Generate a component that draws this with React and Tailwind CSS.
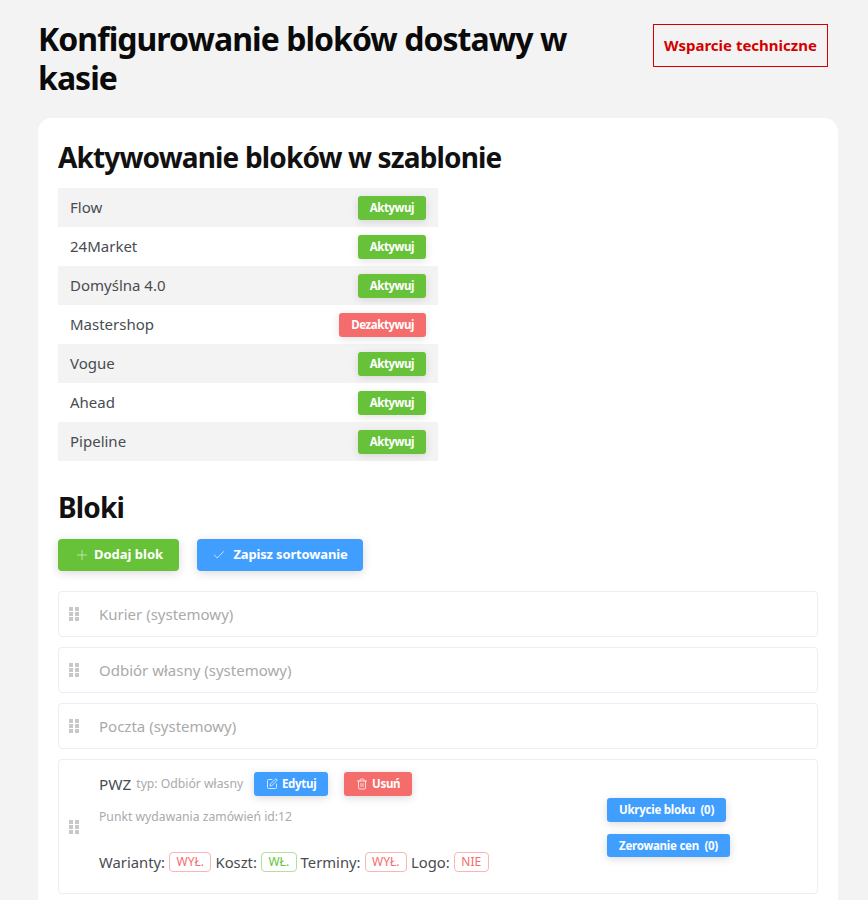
import React from "react";
import { Plus, Check, SquarePen, Trash2 } from "lucide-react";

const F = { fontFamily: '"Noto Sans", sans-serif' };

const rows = [
  ["Flow", 1], ["24Market", 1], ["Domyślna 4.0", 1], ["Mastershop", 0], ["Vogue", 1], ["Ahead", 1], ["Pipeline", 1],
];

function Grip() {
  return (
    <svg width="10" height="14" viewBox="0 0 10 14" className="shrink-0" fill="#c8c8c8">
      <rect x="0" y="0" width="4" height="4" /><rect x="6" y="0" width="4" height="4" />
      <rect x="0" y="5" width="4" height="4" /><rect x="6" y="5" width="4" height="4" />
      <rect x="0" y="10" width="4" height="4" /><rect x="6" y="10" width="4" height="4" />
    </svg>
  );
}

function Sys({ children }) {
  return (
    <div className="h-[46px] border border-[#ebeef5] rounded-[4px] flex items-center pl-[10px] gap-[20px] text-[15px] text-[#aaaaaa]">
      <Grip />
      <span>{children}</span>
    </div>
  );
}

function Tag({ on, children }) {
  return (
    <span className={"inline-flex items-center justify-center h-[20px] px-[6.5px] rounded-[4px] border text-[12px] " + (on ? "border-[#b3e19d] text-[#67c23a]" : "border-[#fab6b6] text-[#f56c6c]")}>
      {children}
    </span>
  );
}

export default function App() {
  return (
    <div style={F} className="h-[900px] overflow-hidden bg-[#f3f3f3] pl-[38px] pr-[30px] pt-[24px]">
      <div className="flex items-start justify-between pr-[10px]">
        <h1 className="w-[560px] text-[32px] leading-[39px] font-bold tracking-[-0.95px] text-[#0a0a0a] -mt-[5px]">Konfigurowanie bloków dostawy w kasie</h1>
        <button className="w-[175px] h-[43px] border border-[#d40000] text-[#d40000] text-[15px] font-bold">Wsparcie techniczne</button>
      </div>
      <div className="mt-[21px] w-[800px] bg-white rounded-[14px] p-[20px] h-[900px]">
        <h2 className="-mt-[1px] text-[28px] leading-[40px] font-bold tracking-[-0.85px] text-[#111111]">Aktywowanie bloków w szablonie</h2>
        <div className="mt-[11px] w-[380px]">
          {rows.map(([n, a], i) => (
            <div key={n} className={"h-[39px] flex items-center justify-between px-[12px] text-[15px] text-[#484c52] " + (i % 2 === 0 ? "bg-[#f3f3f3]" : "bg-white")}>
              <span>{n}</span>
              <button className={"h-[24px] px-[12px] rounded-[3px] text-[11.5px] font-bold tracking-[-0.45px] text-white shadow-[0_2px_8px_rgba(0,0,0,0.12)] " + (a ? "bg-[#67c23a]" : "bg-[#f56c6c]")}>{a ? "Aktywuj" : "Dezaktywuj"}</button>
            </div>
          ))}
        </div>
        <h2 className="mt-[24px] text-[28px] leading-[44px] font-bold tracking-[-0.85px] text-[#111111]">Bloki</h2>
        <div className="mt-[10px] flex gap-[18px]">
          <button className="h-[32px] w-[121px] rounded-[4px] bg-[#67c23a] text-white text-[13px] font-bold flex items-center justify-center gap-[4px] shadow-[0_2px_10px_rgba(0,0,0,0.15)]">
            <Plus size={16} strokeWidth={1.25} className="text-[#cdeabd]" />Dodaj blok
          </button>
          <button className="h-[32px] w-[166px] rounded-[4px] bg-[#409eff] text-white text-[13px] font-bold tracking-[-0.15px] flex items-center justify-center gap-[7px] shadow-[0_2px_10px_rgba(0,0,0,0.15)]">
            <Check size={14} strokeWidth={1.25} />Zapisz sortowanie
          </button>
        </div>
        <div className="mt-[20px] flex flex-col gap-[10px]">
          <Sys>Kurier (systemowy)</Sys>
          <Sys>Odbiór własny (systemowy)</Sys>
          <Sys>Poczta (systemowy)</Sys>
          <div className="h-[135px] border border-[#ebeef5] rounded-[4px] flex items-center pl-[10px] gap-[20px] text-[#484c52]">
            <Grip />
            <div className="flex-1 self-stretch pt-[12px] flex flex-col">
              <div className="flex items-center h-[24px]">
                <span className="text-[15.3px] text-[#484c52]">PWZ</span>
                <span className="ml-[5px] text-[12.2px] text-[#aaaaaa]">typ: Odbiór własny</span>
                <button className="ml-[11px] h-[24px] w-[74px] rounded-[3px] bg-[#409eff] text-white text-[11.5px] font-bold tracking-[-0.3px] flex items-center justify-center gap-[4px] shadow-[0_2px_8px_rgba(0,0,0,0.15)]">
                  <SquarePen size={12} strokeWidth={1.5} />Edytuj
                </button>
                <button className="ml-[16px] h-[24px] w-[68px] rounded-[3px] bg-[#f56c6c] text-white text-[11.5px] font-bold tracking-[-0.3px] flex items-center justify-center gap-[4px] shadow-[0_2px_8px_rgba(0,0,0,0.15)]">
                  <Trash2 size={12} strokeWidth={1.5} />Usuń
                </button>
              </div>
              <div className="mt-[12px] text-[12.2px] leading-[18px] text-[#aaaaaa]">Punkt wydawania zamówień id:12</div>
              <div className="mt-[25px] flex items-center gap-[4px] text-[14.8px] text-[#484c52]">
                <span>Warianty:</span><Tag>WYŁ.</Tag>
                <span>Koszt:</span><Tag on>WŁ.</Tag>
                <span>Terminy:</span><Tag>WYŁ.</Tag>
                <span>Logo:</span><Tag>NIE</Tag>
              </div>
            </div>
            <div className="w-[210px] mt-[2px] flex flex-col items-start gap-[12px] shrink-0">
              <button className="h-[24px] px-[12px] rounded-[3px] bg-[#409eff] text-white text-[11.5px] font-bold tracking-[-0.25px] shadow-[0_2px_8px_rgba(0,0,0,0.15)] whitespace-pre">Ukrycie bloku  (0)</button>
              <button className="h-[23px] px-[12px] rounded-[3px] bg-[#409eff] text-white text-[11.5px] font-bold tracking-[-0.25px] shadow-[0_2px_8px_rgba(0,0,0,0.15)] whitespace-pre">Zerowanie cen  (0)</button>
            </div>
          </div>
        </div>
      </div>
    </div>
  );
}
